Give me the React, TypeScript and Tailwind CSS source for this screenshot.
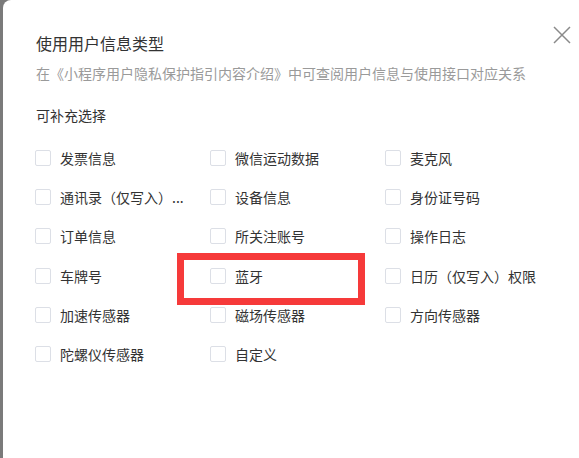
const options: string[][] = [
  ["发票信息", "微信运动数据", "麦克风"],
  ["通讯录（仅写入）...", "设备信息", "身份证号码"],
  ["订单信息", "所关注账号", "操作日志"],
  ["车牌号", "蓝牙", "日历（仅写入）权限"],
  ["加速传感器", "磁场传感器", "方向传感器"],
  ["陀螺仪传感器", "自定义"],
];

const Option = ({ label }: { label: string }) => (
  <label className="flex h-[39.3px] items-center gap-[9px]">
    <span className="h-[16px] w-[16px] shrink-0 rounded-[2px] border border-[#dcdfe6] bg-white" />
    <span className="whitespace-nowrap text-[14px] leading-[22px] text-[#333]">
      {label}
    </span>
  </label>
);

export default function App() {
  return (
    <div
      className="flex h-[458px] w-[579px] bg-[#7a7a7a]"
      style={{ fontFamily: '"Noto Sans CJK SC", "Noto Sans", sans-serif' }}
    >
      <div className="relative ml-[3px] flex-1 overflow-hidden rounded-tl-[8px] bg-white pl-[32px] pt-[31px]">
        <button
          type="button"
          className="absolute right-[8px] top-[26px] text-[#8a8a8a]"
        >
          <svg width="18" height="18" viewBox="0 0 18 18" fill="none">
            <path
              d="M1 1L17 17M17 1L1 17"
              stroke="currentColor"
              strokeWidth="1.5"
            />
          </svg>
        </button>

        <h2 className="pl-px text-[16px] leading-[24px] text-[#333]">使用用户信息类型</h2>
        <p className="mt-[7px] pl-px text-[14px] leading-[22px] text-[#9a9a9a]">
          在《小程序用户隐私保护指引内容介绍》中可查阅用户信息与使用接口对应关系
        </p>
        <p className="mt-[20px] pl-px text-[14px] leading-[22px] text-[#333]">可补充选择</p>

        <div className="mt-[12px] grid grid-cols-[175px_175px_175px]">
          {options.flat().map((o) => (
            <Option key={o} label={o} />
          ))}
        </div>

        <div className="pointer-events-none absolute left-[174px] top-[253px] h-[52px] w-[188px] border-[7px] border-[#f63a3a]" />
      </div>
    </div>
  );
}
